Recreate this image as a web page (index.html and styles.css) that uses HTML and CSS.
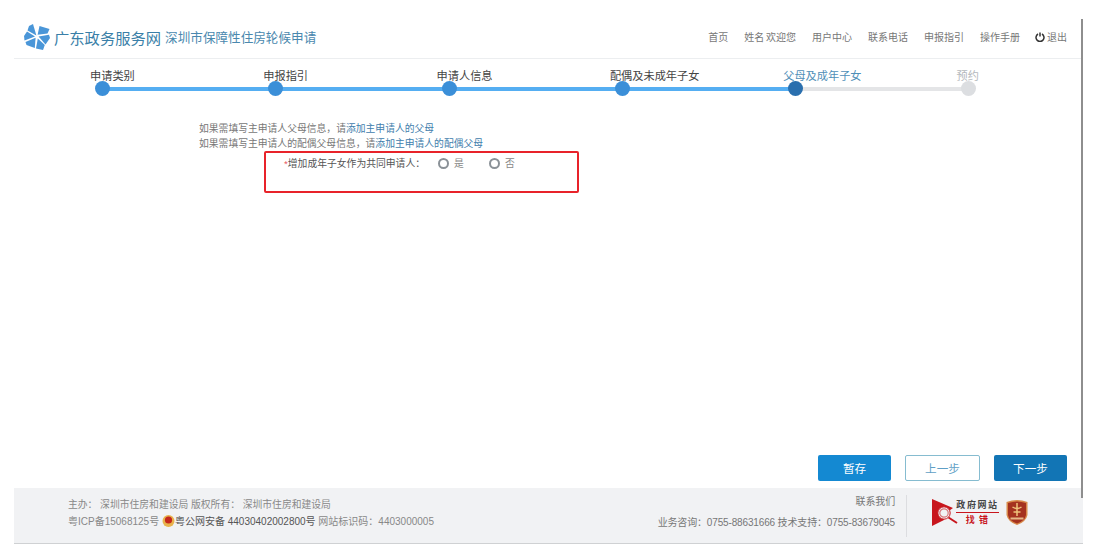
FILE: index.html
```html
<!DOCTYPE html>
<html lang="zh-CN">
<head>
    <meta charset="UTF-8">
    <title>深圳市保障性住房轮候申请</title>
    <link rel="stylesheet" href="styles.css">
</head>
<body>

<div class="page">
    <div class="header">
        <div class="brand">
            <svg class="logo" width="26" height="26" viewBox="0 0 26 26">
                <g fill="#4a96d8">
                    <path d="M9 0 L12.4 11.4 L3.5 6.5 L5 2 Z"/>
                    <path d="M13.6 10.8 L15.5 2 L25.5 5 L23.5 9.5 Z"/>
                    <path d="M14.6 12.4 L25 10.8 L26 14 L21.5 20.5 Z"/>
                    <path d="M13.8 14.4 L20.8 21 L19 26 L12 24.5 Z"/>
                    <path d="M11.6 13.8 L10.8 24 L2.5 21 L1.5 18 Z"/>
                    <path d="M11 12.4 L0.5 16.5 L0 12 L3 7.5 Z"/>
                </g>
            </svg>
            <span class="brand-name">广东政务服务网</span>
            <span class="brand-sub">深圳市保障性住房轮候申请</span>
        </div>
        <div class="top-nav">
            <a>首页</a>
            <a class="user">姓名 欢迎您</a>
            <a>用户中心</a>
            <a>联系电话</a>
            <a>申报指引</a>
            <a>操作手册</a>
            <a class="logout">
                <svg width="10" height="10" viewBox="0 0 10 10"><path d="M3 2 A4 4 0 1 0 7 2" fill="none" stroke="#333" stroke-width="1.5"/><path d="M5 0.5 V4.5" stroke="#333" stroke-width="1.5"/></svg>
                退出
            </a>
        </div>
    </div>

    <div class="steps">
        <div class="step done">
            <span class="step-name">申请类别</span>
            <i class="dot"></i>
        </div>
        <div class="step done">
            <span class="step-name">申报指引</span>
            <i class="dot"></i>
        </div>
        <div class="step done">
            <span class="step-name">申请人信息</span>
            <i class="dot"></i>
        </div>
        <div class="step done">
            <span class="step-name">配偶及未成年子女</span>
            <i class="dot"></i>
        </div>
        <div class="step current">
            <span class="step-name">父母及成年子女</span>
            <i class="dot"></i>
        </div>
        <div class="step todo">
            <span class="step-name">预约</span>
            <i class="dot"></i>
        </div>
    </div>

    <div class="content">
        <div class="tips">
            <p>如果需填写主申请人父母信息，请<a>添加主申请人的父母</a></p>
            <p>如果需填写主申请人的配偶父母信息，请<a>添加主申请人的配偶父母</a></p>
        </div>
        <div class="highlight">
            <span class="question"><em>*</em>增加成年子女作为共同申请人：</span>
            <label class="radio"><i></i>是</label>
            <label class="radio"><i></i>否</label>
        </div>
    </div>

    <div class="actions">
        <button class="btn btn-save">暂存</button>
        <button class="btn btn-prev">上一步</button>
        <button class="btn btn-next">下一步</button>
    </div>

    <div class="footer">
        <div class="foot-left">
            <p class="host">主办：&nbsp;深圳市住房和建设局 版权所有：&nbsp;深圳市住房和建设局</p>
            <p>粤ICP备15068125号 <svg class="badge" width="13" height="14" viewBox="0 0 13 14"><circle cx="6.5" cy="7" r="6" fill="#e8b34c"/><circle cx="6.5" cy="6" r="3.6" fill="#c5281c"/></svg><span class="dark">粤公网安备 44030402002800号</span> 网站标识码：4403000005</p>
        </div>
        <div class="foot-right">
            <p>联系我们</p>
            <p>业务咨询：0755-88631666 技术支持：0755-83679045</p>
        </div>
        <div class="foot-logos">
            <svg class="flag" width="27" height="27" viewBox="0 0 27 27">
                <path d="M0 0 L21 9 L14 14 L12 21 L0 27 Z" fill="#c8161d"/>
                <circle cx="12" cy="14" r="6.2" fill="#f1f2f4" stroke="#c8161d" stroke-width="1"/>
                <circle cx="12" cy="14" r="4.2" fill="none" stroke="#d8777b" stroke-width="1.2"/>
                <path d="M16.5 18.5 L25 24" stroke="#c8161d" stroke-width="2"/>
            </svg>
            <div class="wrong">
                <span class="wrong-top">政府网站</span>
                <span class="wrong-bottom">找 错</span>
            </div>
            <svg class="shield" width="22" height="26" viewBox="0 0 22 26">
                <path d="M0.5 3 Q11 -1 21.5 3 L21.5 16 Q20 23 11 26 Q2 23 0.5 16 Z" fill="#d8894a"/>
                <path d="M2 4 Q11 1 20 4 L20 16 Q19 22 11 24.5 Q3 22 2 16 Z" fill="#a5321f"/>
                <path d="M11 4 V17 M6.5 8 Q11 11 15.5 8 M7.5 13 H14.5" fill="none" stroke="#eec27b" stroke-width="1.5"/>
                <rect x="4.5" y="18.5" width="13" height="2" fill="#e6b887"/>
            </svg>
        </div>
    </div>
</div>

<i class="edge"></i>

</body>
</html>
```

FILE: styles.css
```css
html, body {
    height: 100%;
}
body {
    margin: 0;
    background: #fff;
    color: #666;
    font-family: "Liberation Sans", "Noto Sans CJK SC", sans-serif;
    font-size: 10px;
    overflow: hidden;
}
p {
    margin: 0;
}
.page {
    width: 1069px;
    height: 544px;
    margin-left: 14px;
    display: flex;
    flex-direction: column;
}
.edge {
    position: absolute;
    left: 1081px;
    top: 19px;
    width: 2px;
    height: 479px;
    background: #8e8e8e;
}

/* header */
.header {
    height: 59px;
    box-sizing: border-box;
    padding: 15px 16px 0 10px;
    border-bottom: 1px solid #eceef0;
    display: flex;
    justify-content: space-between;
    align-items: center;
}
.brand {
    display: flex;
    align-items: center;
}
.logo {
    margin-right: 4px;
}
.brand-name {
    font-size: 15.3px;
    color: #3a7fa8;
    margin-right: 4px;
}
.brand-sub {
    font-size: 12.6px;
    color: #4a88ae;
}
.top-nav {
    display: flex;
    align-items: center;
    gap: 16px;
    font-size: 10px;
    color: #777;
}
.user {
    word-spacing: -1px;
}
.logout {
    display: flex;
    align-items: center;
    gap: 2px;
    margin-left: -1px;
}

/* steps */
.steps {
    display: grid;
    grid-template-columns: repeat(6, 173.3px);
    margin-left: 76px;
    padding-top: 10px;
}
.step {
    position: relative;
    display: flex;
    flex-direction: column;
    align-items: flex-start;
}
.step-name {
    font-size: 11.2px;
    line-height: 14px;
    color: #444;
}
.dot {
    position: relative;
    z-index: 1;
    width: 15px;
    height: 15px;
    margin: -2px 0 0 5px;
    border-radius: 50%;
    background: #3b8fd8;
}
.step::after {
    content: "";
    position: absolute;
    left: 12px;
    width: 100%;
    bottom: 5px;
    height: 4px;
    background: #55aef2;
}
.step:nth-child(5)::after {
    background: #e4e5e7;
}
.step:last-child::after {
    display: none;
}
.current .step-name {
    color: #4f8fb8;
}
.current .dot {
    background: #2a6fae;
}
.todo .step-name {
    color: #b4b8bc;
}
.todo .dot {
    background: #dcdee1;
}

/* form area */
.content {
    flex: 1;
    padding: 25px 0 0 185px;
}
.tips {
    font-size: 9.8px;
    line-height: 15px;
    color: #777;
}
.tips a {
    color: #3f80ad;
}
.highlight {
    width: 315px;
    height: 42px;
    box-sizing: border-box;
    margin-left: 65px;
    padding: 3px 0 0 18px;
    border: 2px solid #e8232a;
    border-radius: 2px;
    display: flex;
    align-items: flex-start;
    font-size: 9.8px;
    line-height: 15px;
    color: #555;
}
.question {
    width: 154px;
}
.question em {
    color: #e8555a;
    font-style: normal;
}
.radio {
    display: flex;
    align-items: center;
    width: 51px;
    color: #888;
}
.radio i {
    width: 7px;
    height: 7px;
    margin-right: 5px;
    border: 2px solid #8a9197;
    border-radius: 50%;
}

/* buttons */
.actions {
    display: flex;
    justify-content: flex-end;
    gap: 14px;
    padding-right: 16px;
    height: 33px;
}
.btn {
    width: 73px;
    height: 26px;
    box-sizing: border-box;
    border: 1px solid transparent;
    border-radius: 2px;
    font: inherit;
    font-size: 11.6px;
    color: #fff;
}
.btn-save {
    background: #1489d2;
}
.btn-prev {
    width: 75px;
    background: #fff;
    border-color: #86bcd0;
    color: #5f9fc6;
}
.btn-next {
    background: #1275b5;
}

/* footer */
.footer {
    height: 56px;
    box-sizing: border-box;
    background: #f1f2f4;
    border-bottom: 1px solid #cfd1d3;
    display: flex;
    align-items: flex-start;
    font-size: 10px;
    line-height: 17px;
    color: #888;
}
.foot-left {
    flex: 1;
    padding: 8px 0 0 54px;
}
.host {
    font-size: 9.8px;
}
.foot-left .dark {
    color: #555;
}
.badge {
    vertical-align: -3px;
}
.foot-right {
    text-align: right;
    padding: 5px 11px 0 0;
    letter-spacing: -0.15px;
    color: #777;
}
.foot-right p:last-child {
    margin-top: 4px;
}
.foot-logos {
    width: 177px;
    height: 42px;
    box-sizing: border-box;
    margin-top: 7px;
    padding: 4px 0 0 25px;
    border-left: 1px solid #dcdde0;
    display: flex;
    align-items: flex-start;
}
.wrong {
    width: 43px;
    margin: 1px 7px 0 -3px;
    display: flex;
    flex-direction: column;
    align-items: center;
    font-family: "Liberation Serif", "Noto Sans CJK SC", serif;
    font-size: 9px;
    font-weight: bold;
    line-height: 11px;
}
.wrong-top {
    color: #444;
    border-bottom: 1px solid #c8161d;
    padding-bottom: 1px;
    letter-spacing: 1.6px;
}
.wrong-bottom {
    color: #c8161d;
    margin-top: 2px;
    letter-spacing: 1px;
}
```
